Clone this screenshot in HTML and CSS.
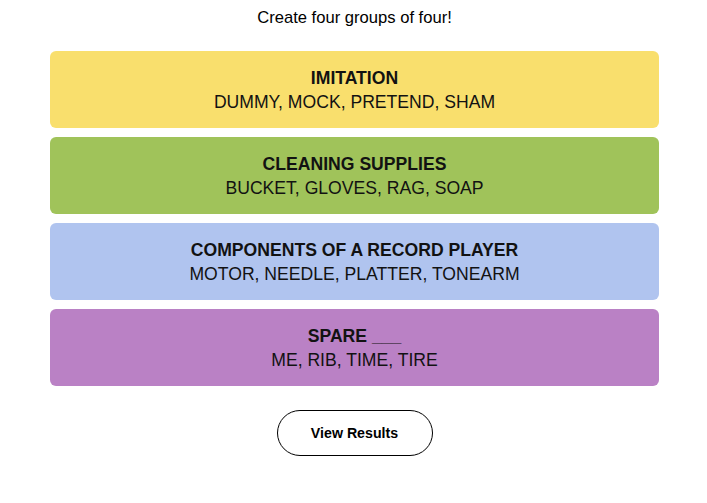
FILE: index.html
```html
<!DOCTYPE html>
<html>
<head>
<meta charset="utf-8">
<link rel="stylesheet" href="styles.css">
</head>
<body>
<main class="page">
  <p class="prompt">Create four groups of four!</p>
  <section class="groups">
    <div class="group yellow">
      <div class="group-title">IMITATION</div>
      <div class="group-words">DUMMY, MOCK, PRETEND, SHAM</div>
    </div>
    <div class="group green">
      <div class="group-title">CLEANING SUPPLIES</div>
      <div class="group-words">BUCKET, GLOVES, RAG, SOAP</div>
    </div>
    <div class="group blue">
      <div class="group-title">COMPONENTS OF A RECORD PLAYER</div>
      <div class="group-words">MOTOR, NEEDLE, PLATTER, TONEARM</div>
    </div>
    <div class="group purple">
      <div class="group-title">SPARE ___</div>
      <div class="group-words">ME, RIB, TIME, TIRE</div>
    </div>
  </section>
  <div class="actions">
    <button class="results-btn">View Results</button>
  </div>
</main>
</body>
</html>
```
FILE: styles.css
```css
html, body {
  margin: 0;
  padding: 0;
  background: #fff;
}
.page {
  font-family: "Liberation Sans", Arial, sans-serif;
  color: #000;
  display: flex;
  flex-direction: column;
  align-items: center;
  padding-left: 2px;
}
.prompt {
  margin: 8px 0 0;
  font-size: 16.6px;
  line-height: 20px;
  text-align: center;
}
.groups {
  margin-top: 23px;
  width: 609px;
  display: flex;
  flex-direction: column;
  gap: 9px;
}
.group {
  height: 77px;
  border-radius: 6px;
  display: flex;
  flex-direction: column;
  align-items: center;
  justify-content: center;
  text-align: center;
  color: #121212;
}
.group-title {
  font-weight: bold;
  font-size: 17.6px;
  line-height: 24px;
}
.group-words {
  font-size: 17.6px;
  line-height: 24px;
}
.yellow { background: #f9df6d; }
.green { background: #a0c35a; }
.blue { background: #b0c4ef; }
.purple { background: #ba81c5; }
.actions {
  margin-top: 24px;
  display: flex;
  justify-content: center;
}
.results-btn {
  width: 156px;
  height: 46px;
  border: 1px solid #000;
  border-radius: 23px;
  background: #fff;
  font-family: "Liberation Sans", Arial, sans-serif;
  font-size: 14.2px;
  font-weight: bold;
  color: #000;
  padding: 0;
}
```
